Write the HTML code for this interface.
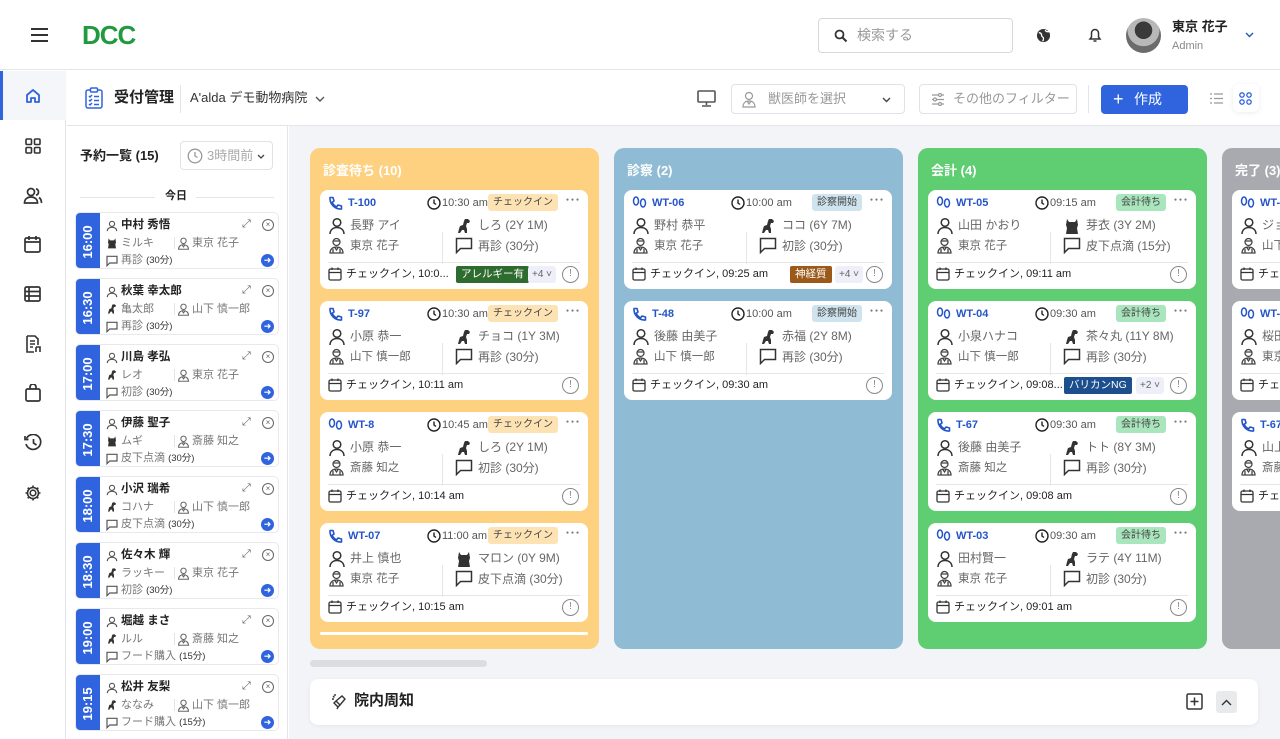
<!DOCTYPE html>
<html><head><meta charset="utf-8">
<style>
*{box-sizing:border-box;margin:0;padding:0}
body{width:1280px;height:739px;overflow:hidden;position:relative;background:#fff;font-family:"Liberation Sans","Noto Sans CJK JP",sans-serif;color:#222;line-height:1.2}
.abs{position:absolute;white-space:nowrap}
svg{display:block}
.hdr{left:0;top:0;width:1280px;height:70px;border-bottom:1px solid #e3e5e8;background:#fff}
.side{left:0;top:71px;width:66px;height:668px;border-right:1px solid #e3e5e8;background:#fff}
.sub{left:67px;top:71px;width:1213px;height:55px;border-bottom:1px solid #e3e5e8;background:#fff}
.lp{left:67px;top:126px;width:221px;height:613px;border-right:1px solid #e3e5e8;background:#fff}
.board{left:289px;top:126px;width:991px;height:613px;background:#f3f4f7}
.col{position:absolute;top:148px;height:501px;border-radius:10px;overflow:hidden}
.col h3{position:absolute;left:13px;top:15px;font-size:13px;color:#fff;font-weight:bold}
.card{position:absolute;left:10px;width:268px;height:99px;background:#fff;border-radius:8px;font-size:12px;color:#666}
.card>*{position:absolute;white-space:nowrap;line-height:15px}
.id{left:28px;top:6px;color:#2455c9;font-weight:bold;font-size:11px}
.tm{left:122px;top:6px;font-size:11px;color:#555}
.bd{top:4px;font-size:10px;padding:1px 5px;border-radius:3px;color:#444}
.dots{left:246px;top:3px;font-size:10px;color:#777;letter-spacing:0}
.vl{left:122px;top:44px;width:1px;height:32px;background:#e6e6e6}
.hr{left:8px;right:8px;top:72px;height:1px;background:#e6e6e6}
.ft{left:26px;top:77px;font-size:11px;color:#222}
.ex{left:242px;top:76px;width:17px;height:17px;border:1.3px solid #888;border-radius:50%;font-size:10px;color:#888;text-align:center;line-height:14px!important}
.it{position:absolute;left:75px;width:204px;height:57px;border:1px solid #e8e9ec;border-radius:5px;background:#fff;overflow:hidden}
.it>div{line-height:14px;white-space:nowrap}
.it .t{position:absolute;left:0;top:0;width:24px;height:57px;background:#2f64de;color:#fff;font-weight:bold;font-size:13px}
.it .t span{position:absolute;left:50%;top:50%;transform:translate(-50%,-50%) rotate(-90deg);white-space:nowrap}
.it .n{position:absolute;left:45px;top:5px;font-size:11.5px;font-weight:bold;color:#222}
.it .p{position:absolute;left:45px;top:23px;font-size:11px;color:#777}
.it .d{position:absolute;left:116px;top:23px;font-size:11px;color:#777}
.it .s{position:absolute;left:45px;top:40px;font-size:11px;color:#777}
.it .s b{font-size:9.5px;color:#333;font-weight:normal}
.it .vs{position:absolute;left:98px;top:24px;width:1px;height:12px;background:#e3e3e3}
.it .go{position:absolute;left:185px;top:41px;width:13px;height:13px;border-radius:50%;background:#2f64de;color:#fff;font-size:9px;line-height:13px!important;text-align:center}
.it .x{position:absolute;left:186px;top:6px;width:12px;height:12px;border:1.2px solid #666;border-radius:50%;font-size:8px;line-height:10px!important;text-align:center;color:#666}
.it .e{position:absolute;left:166px;top:4px;font-size:11px;color:#666}
</style></head><body>

<div class="abs hdr">
  <div class="abs" style="left:31px;top:28px;width:17px;height:2px;background:#333;box-shadow:0 6px 0 #333,0 12px 0 #333"></div>
  <div class="abs" style="left:82px;top:20px;font-size:26px;font-weight:900;color:#1f9a3e;letter-spacing:-1px">DCC</div>
  <div class="abs" style="left:818px;top:18px;width:195px;height:35px;border:1px solid #d5d7db;border-radius:4px">
    <svg class="abs" style="left:15px;top:10px" width="14" height="14" viewBox="0 0 14 14"><circle cx="5.5" cy="5.5" r="4" fill="none" stroke="#333" stroke-width="1.8"/><path d="M8.5 8.5L12.5 12.5" stroke="#333" stroke-width="2"/></svg>
    <span class="abs" style="left:38px;top:8px;font-size:14px;color:#999">検索する</span>
  </div>
  <svg class="abs" style="left:1036px;top:28px" width="15" height="15" viewBox="0 0 16 16"><circle cx="8" cy="8" r="7" fill="#333"/><path d="M3 5c2 0 3 1 3 3s2 1 2 3-1 3-1 3M10 2c0 2 2 2 4 2" stroke="#fff" stroke-width="1.4" fill="none"/></svg>
  <svg class="abs" style="left:1088px;top:27px" width="14" height="16" viewBox="0 0 14 16"><path d="M2 12h10l-1.5-2V6a3.5 3.5 0 0 0-7 0v4z" fill="none" stroke="#333" stroke-width="1.5"/><path d="M5.5 14h3" stroke="#333" stroke-width="1.5"/></svg>
  <div class="abs" style="left:1126px;top:18px;width:35px;height:35px;border-radius:50%;background:radial-gradient(circle at 50% 35%,#3a3a3a 0 30%,#b8b8b8 31% 55%,#6b6b6b 56%)"></div>
  <span class="abs" style="left:1172px;top:19px;font-size:13px;font-weight:bold">東京 花子</span>
  <span class="abs" style="left:1172px;top:40px;font-size:11px;color:#888">Admin</span>
  <svg class="abs" style="left:1245px;top:32px" width="9" height="6" viewBox="0 0 9 6"><path d="M1 1l3.5 3.5L8 1" stroke="#2455c9" stroke-width="1.4" fill="none"/></svg>
</div>

<div class="abs side">
  <div class="abs" style="left:0;top:0;width:66px;height:49px;background:#f4f6fa"></div>
  <div class="abs" style="left:0;top:0;width:3px;height:49px;background:#2f64de"></div>
  <svg class="abs" style="left:25px;top:17px" width="16" height="16" viewBox="0 0 16 16"><path d="M2 7L8 2l6 5v7H10v-4H6v4H2z" fill="none" stroke="#2f64de" stroke-width="1.8" stroke-linejoin="round"/></svg>
  <svg class="abs" style="left:25px;top:67px" width="16" height="16" viewBox="0 0 16 16" fill="none" stroke="#333" stroke-width="1.6"><rect x="1" y="1" width="5.5" height="5.5" rx="1"/><rect x="9.5" y="1" width="5.5" height="5.5" rx="1"/><rect x="1" y="9.5" width="5.5" height="5.5" rx="1"/><rect x="9.5" y="9.5" width="5.5" height="5.5" rx="1"/></svg>
  <svg class="abs" style="left:23px;top:116px" width="20" height="18" viewBox="0 0 20 18" fill="none" stroke="#333" stroke-width="1.7"><circle cx="8" cy="5" r="3.5"/><path d="M1.5 16c0-4 3-6 6.5-6s6.5 2 6.5 6z"/><path d="M13 1.8a3.3 3.3 0 0 1 0 6.4M16 10.5c1.5 1 2.5 3 2.5 5.5"/></svg>
  <svg class="abs" style="left:24px;top:164px" width="17" height="18" viewBox="0 0 17 18" fill="none" stroke="#333" stroke-width="1.7"><rect x="1" y="3" width="15" height="14" rx="1.5"/><path d="M1 7h15M5 1v4M12 1v4"/></svg>
  <svg class="abs" style="left:24px;top:215px" width="17" height="16" viewBox="0 0 17 16" fill="none" stroke="#333" stroke-width="1.7"><rect x="1" y="1" width="15" height="14" rx="1.5"/><path d="M1 5.5h15M1 10h15M5 1v14"/></svg>
  <svg class="abs" style="left:24px;top:264px" width="18" height="18" viewBox="0 0 18 18" fill="none" stroke="#333" stroke-width="1.6"><path d="M3 1h8l3 3v6M3 1v16h7"/><path d="M6 6h5M6 9h5M6 12h3"/><path d="M12 12v5M12 12h4v5"/></svg>
  <svg class="abs" style="left:25px;top:313px" width="16" height="18" viewBox="0 0 16 18" fill="none" stroke="#333" stroke-width="1.7"><rect x="1" y="5" width="14" height="12" rx="1.5"/><path d="M5 5V3a3 3 0 0 1 6 0v2"/></svg>
  <svg class="abs" style="left:24px;top:363px" width="18" height="17" viewBox="0 0 18 17" fill="none" stroke="#333" stroke-width="1.7"><path d="M2.5 4.5A7.5 7.5 0 1 1 2 10"/><path d="M1 2v3.5h3.5M9.5 5v4l3 2"/></svg>
  <svg class="abs" style="left:24px;top:413px" width="18" height="18" viewBox="0 0 18 18" fill="none" stroke="#333" stroke-width="1.6"><circle cx="9" cy="9" r="2.8"/><path d="M9 1.5v2.5M9 14v2.5M1.5 9H4M14 9h2.5M3.7 3.7l1.8 1.8M12.5 12.5l1.8 1.8M3.7 14.3l1.8-1.8M12.5 5.5l1.8-1.8"/><circle cx="9" cy="9" r="5.5"/></svg>
</div>

<div class="abs sub">
  <svg class="abs" style="left:18px;top:16px" width="18" height="22" viewBox="0 0 18 22" fill="none" stroke="#2f64de" stroke-width="1.5"><rect x="1" y="3" width="16" height="18" rx="2"/><rect x="5.5" y="1" width="7" height="4" rx="1" fill="#fff"/><path d="M4 9l1 1 2-2M4 13l1 1 2-2M4 17l1 1 2-2M9 9.5h5M9 13.5h5M9 17.5h5"/></svg>
  <span class="abs" style="left:47px;top:18px;font-size:15px;font-weight:bold">受付管理</span>
  <div class="abs" style="left:113px;top:14px;width:1px;height:28px;background:#e3e5e8"></div>
  <span class="abs" style="left:123px;top:19px;font-size:13px;color:#333">A'alda デモ動物病院</span>
  <svg class="abs" style="left:248px;top:25px" width="10" height="6" viewBox="0 0 10 6"><path d="M1 1l4 4 4-4" stroke="#555" stroke-width="1.4" fill="none"/></svg>
  <svg class="abs" style="left:630px;top:19px" width="19" height="17" viewBox="0 0 19 17" fill="none" stroke="#555" stroke-width="1.6"><rect x="1" y="1" width="17" height="11" rx="1"/><path d="M9.5 12v3M5 16h9"/></svg>
  <div class="abs" style="left:664px;top:13px;width:174px;height:30px;border:1px solid #e0e2e5;border-radius:4px">
    <svg class="abs" style="left:9px;top:6px" width="16" height="17" viewBox="0 0 16 17" fill="none" stroke="#999" stroke-width="1.2"><circle cx="8" cy="5" r="3.5"/><path d="M2 16c0-4 2.5-6 6-6s6 2 6 6zM6 10l2 3 2-3"/></svg>
    <span class="abs" style="left:36px;top:6px;font-size:13px;color:#999">獣医師を選択</span>
    <svg class="abs" style="left:150px;top:12px" width="9" height="6" viewBox="0 0 9 6"><path d="M1 1l3.5 3.5L8 1" stroke="#444" stroke-width="1.4" fill="none"/></svg>
  </div>
  <div class="abs" style="left:852px;top:13px;width:158px;height:30px;border:1px solid #e0e2e5;border-radius:4px">
    <svg class="abs" style="left:11px;top:8px" width="14" height="13" viewBox="0 0 14 13" fill="none" stroke="#999" stroke-width="1.2"><path d="M1 2h12M1 6.5h12M1 11h12"/><circle cx="9" cy="2" r="1.5" fill="#fff"/><circle cx="4" cy="6.5" r="1.5" fill="#fff"/><circle cx="9" cy="11" r="1.5" fill="#fff"/></svg>
    <span class="abs" style="left:33px;top:6px;font-size:13px;color:#999">その他のフィルター</span>
  </div>
  <div class="abs" style="left:1021px;top:14px;width:1px;height:28px;background:#e3e5e8"></div>
  <div class="abs" style="left:1034px;top:14px;width:87px;height:29px;background:#2f64de;border-radius:4px;color:#fff;font-size:14px">
    <span class="abs" style="left:12px;top:4px;font-size:18px;line-height:20px">+</span>
    <span class="abs" style="left:33px;top:6px">作成</span>
  </div>
  <svg class="abs" style="left:1143px;top:22px" width="13" height="11" viewBox="0 0 13 11" fill="none" stroke="#999" stroke-width="1.2"><path d="M0 1h2M4 1h9M0 5.5h2M4 5.5h9M0 10h2M4 10h9"/></svg>
  <div class="abs" style="left:1166px;top:13px;width:26px;height:28px;background:#fff;border-radius:6px;box-shadow:0 1px 6px rgba(0,0,0,.08)"></div>
  <svg class="abs" style="left:1172px;top:21px" width="13" height="13" viewBox="0 0 13 13" fill="none" stroke="#2f64de" stroke-width="1.3"><circle cx="3" cy="3" r="2.2"/><circle cx="10" cy="3" r="2.2"/><circle cx="3" cy="10" r="2.2"/><circle cx="10" cy="10" r="2.2"/></svg>
</div>

<div class="abs lp">
  <span class="abs" style="left:13px;top:22px;font-size:13px;font-weight:bold">予約一覧 (15)</span>
  <div class="abs" style="left:113px;top:15px;width:93px;height:29px;border:1px solid #e0e2e5;border-radius:4px">
    <svg class="abs" style="left:6px;top:6px" width="16" height="16" viewBox="0 0 16 16" fill="none" stroke="#999" stroke-width="1.3"><circle cx="8" cy="8" r="6.8"/><path d="M8 4v4l2.5 1.5"/></svg>
    <span class="abs" style="left:26px;top:6px;font-size:13px;color:#aaa">3時間前</span>
    <svg class="abs" style="left:76px;top:12px" width="8" height="5" viewBox="0 0 8 5"><path d="M1 1l3 3 3-3" stroke="#444" stroke-width="1.3" fill="none"/></svg>
  </div>
  <div class="abs" style="left:13px;top:71px;width:75px;height:1px;background:#e3e5e8"></div>
  <span class="abs" style="left:98px;top:64px;font-size:11px;font-weight:bold">今日</span>
  <div class="abs" style="left:129px;top:71px;width:78px;height:1px;background:#e3e5e8"></div>
</div>

<div id="items"></div>

<div class="abs board"></div>

<div class="col" style="left:310px;width:289px;background:#fdd17f"><h3>診査待ち (10)</h3>
 <div class="abs" style="left:10px;top:484px;width:268px;height:3px;background:#fff;border-radius:2px"></div>
</div>
<div class="col" style="left:614px;width:289px;background:#8fbcd4"><h3>診察 (2)</h3></div>
<div class="col" style="left:918px;width:289px;background:#5fcd71"><h3>会計 (4)</h3></div>
<div class="col" style="left:1222px;width:80px;background:#a8aab0"><h3>完了 (3)</h3></div>

<div id="cards"></div>

<div class="abs" style="left:310px;top:660px;width:177px;height:7px;background:#dcdde0;border-radius:4px"></div>
<div class="abs" style="left:310px;top:679px;width:948px;height:46px;background:#fff;border-radius:8px;box-shadow:0 1px 5px rgba(0,0,0,.06)">
  <svg class="abs" style="left:21px;top:14px" width="17" height="17" viewBox="0 0 17 17" fill="none" stroke="#333" stroke-width="1.4"><path d="M5 8l6-5 3 3-5 6zM5 8l-2 2 4 4 2-2M7 14l-1 2"/><path d="M2 3l1.5 1.5M1 6h2M4 1v2"/></svg>
  <span class="abs" style="left:44px;top:13px;font-size:15px;font-weight:bold">院内周知</span>
  <svg class="abs" style="left:876px;top:14px" width="17" height="17" viewBox="0 0 17 17" fill="none" stroke="#333" stroke-width="1.5"><rect x="1" y="1" width="15" height="15" rx="1.5"/><path d="M8.5 4.5v8M4.5 8.5h8"/></svg>
  <div class="abs" style="left:906px;top:12px;width:21px;height:22px;background:#e9eaec;border-radius:3px"></div>
  <svg class="abs" style="left:911px;top:20px" width="11" height="7" viewBox="0 0 11 7"><path d="M1 6l4.5-4.5L10 6" stroke="#333" stroke-width="1.4" fill="none"/></svg>
</div>

<script>
var PB='<svg width="18" height="18" viewBox="0 0 18 18" fill="none" stroke="#333" stroke-width="1.5"><circle cx="9" cy="5.5" r="3.8"/><path d="M2 17c0-4 3-6.5 7-6.5s7 2.5 7 6.5"/></svg>';
var V='<svg width="17" height="17" viewBox="0 0 17 17" fill="none" stroke="#444" stroke-width="1.3"><circle cx="8.5" cy="5" r="3.5"/><path d="M5 4h7M2 16c0-4 3-6 6.5-6s6.5 2 6.5 6zM6.5 10l2 3 2-3M5 12v4M12 12v4"/></svg>';
var Vs='<svg width="13" height="13" viewBox="0 0 17 17" fill="none" stroke="#666" stroke-width="1.4"><circle cx="8.5" cy="5" r="3.5"/><path d="M2 16c0-4 3-6 6.5-6s6.5 2 6.5 6zM6.5 10l2 3 2-3"/></svg>';
var CH='<svg width="18" height="17" viewBox="0 0 18 17" fill="none" stroke="#333" stroke-width="1.5"><path d="M1.5 1.5h15v10h-11l-4 4z"/></svg>';
var CHs='<svg width="12" height="12" viewBox="0 0 18 17" fill="none" stroke="#555" stroke-width="1.8"><path d="M1.5 1.5h15v10h-11l-4 4z"/></svg>';
var DOG='<svg width="18" height="18" viewBox="0 0 18 18"><path d="M10 2l3 0 2 2-1 2h-2l-1 3 1 3v4h-2l-1-3-2 0-2 3H3l1-4 1-3 3-1 1-4z" fill="#333"/></svg>';
var CAT='<svg width="18" height="18" viewBox="0 0 18 18"><path d="M4 2l2 3h6l2-3 1 6-1 3 1 6H3l1-6-1-3z" fill="#333"/></svg>';
var CAL='<svg width="14" height="14" viewBox="0 0 14 14" fill="none" stroke="#333" stroke-width="1.3"><rect x="1" y="2" width="12" height="11" rx="1.5"/><path d="M1 5.5h12M4 0.5v2.5M10 0.5v2.5"/></svg>';
var CLK='<svg width="14" height="14" viewBox="0 0 14 14" fill="none" stroke="#222" stroke-width="1.4"><circle cx="7" cy="7" r="6"/><path d="M7 3.5V7l2 1.5"/></svg>';
var PH='<svg width="15" height="15" viewBox="0 0 15 15" fill="none" stroke="#2455c9" stroke-width="1.6"><path d="M2 1.5l3 0 1 3.5-1.8 1.3a8 8 0 0 0 4.5 4.5L10 9l3.5 1v3c-6.5.5-12-5-11.5-11.5z" stroke-linejoin="round"/></svg>';
var FT='<svg width="15" height="15" viewBox="0 0 15 15" fill="none" stroke="#2455c9" stroke-width="1.5"><ellipse cx="4" cy="5" rx="2.5" ry="4"/><ellipse cx="11" cy="7" rx="2.5" ry="4"/></svg>';

var items=[["16:00","中村 秀悟","ミルキ","東京 花子","再診","30分",1],["16:30","秋葉 幸太郎","亀太郎","山下 慎一郎","再診","30分",0],["17:00","川島 孝弘","レオ","東京 花子","初診","30分",0],["17:30","伊藤 聖子","ムギ","斎藤 知之","皮下点滴","30分",1],["18:00","小沢 瑞希","コハナ","山下 慎一郎","皮下点滴","30分",0],["18:30","佐々木 輝","ラッキー","東京 花子","初診","30分",0],["19:00","堀越 まさ","ルル","斎藤 知之","フード購入","15分",0],["19:15","松井 友梨","ななみ","山下 慎一郎","フード購入","15分",0]];
var h='';
items.forEach(function(a,i){
 var pet=a[6]?'<svg width="12" height="12" viewBox="0 0 18 18"><path d="M4 2l2 3h6l2-3 1 6-1 3 1 6H3l1-6-1-3z" fill="#333"/></svg>':'<svg width="12" height="12" viewBox="0 0 18 18"><path d="M10 2l3 0 2 2-1 2h-2l-1 3 1 3v4h-2l-1-3-2 0-2 3H3l1-4 1-3 3-1 1-4z" fill="#333"/></svg>';
 h+='<div class="it" style="top:'+(212+i*66)+'px"><div class="t"><span>'+a[0]+'</span></div>'+
 '<div class="abs" style="left:30px;top:7px"><svg width="12" height="12" viewBox="0 0 14 14" fill="none" stroke="#555" stroke-width="1.3"><circle cx="7" cy="4.5" r="3"/><path d="M1.5 13c0-3 2.5-4.5 5.5-4.5s5.5 1.5 5.5 4.5"/></svg></div>'+
 '<div class="n">'+a[1]+'</div><div class="e">⤢</div><div class="x">×</div>'+
 '<div class="abs" style="left:30px;top:24px">'+pet+'</div><div class="p">'+a[2]+'</div><div class="vs"></div>'+
 '<div class="abs" style="left:101px;top:24px">'+Vs+'</div><div class="d">'+a[3]+'</div>'+
 '<div class="abs" style="left:30px;top:42px">'+CHs+'</div><div class="s">'+a[4]+' <b>('+a[5]+')</b></div><div class="go">➜</div></div>';
});
document.getElementById('items').innerHTML=h;

var cols=[
 [310,"#fde3b4",[["P","T-100","10:30 am","チェックイン","長野 アイ","東京 花子","しろ (2Y 1M)","再診 (30分)","10:0...",["アレルギー有","#2e6b2e"],DOG],
   ["P","T-97","10:30 am","チェックイン","小原 恭一","山下 慎一郎","チョコ (1Y 3M)","再診 (30分)","10:11 am",null,DOG],
   ["F","WT-8","10:45 am","チェックイン","小原 恭一","斎藤 知之","しろ (2Y 1M)","初診 (30分)","10:14 am",null,DOG],
   ["P","WT-07","11:00 am","チェックイン","井上 慎也","東京 花子","マロン (0Y 9M)","皮下点滴 (30分)","10:15 am",null,CAT]]],
 [614,"#cfe4ee",[["F","WT-06","10:00 am","診察開始","野村 恭平","東京 花子","ココ (6Y 7M)","初診 (30分)","09:25 am",["神経質","#9b5a1a"],DOG],
   ["P","T-48","10:00 am","診察開始","後藤 由美子","山下 慎一郎","赤福 (2Y 8M)","再診 (30分)","09:30 am",null,DOG]]],
 [918,"#a9e6bd",[["F","WT-05","09:15 am","会計待ち","山田 かおり","東京 花子","芽衣 (3Y 2M)","皮下点滴 (15分)","09:11 am",null,CAT],
   ["F","WT-04","09:30 am","会計待ち","小泉ハナコ","山下 慎一郎","茶々丸 (11Y 8M)","再診 (30分)","09:08...",["バリカンNG","#1d4f8f"],DOG],
   ["P","T-67","09:30 am","会計待ち","後藤 由美子","斎藤 知之","トト (8Y 3M)","再診 (30分)","09:08 am",null,DOG],
   ["F","WT-03","09:30 am","会計待ち","田村賢一","東京 花子","ラテ (4Y 11M)","初診 (30分)","09:01 am",null,DOG]]],
 [1222,"#eee",[["F","WT-02","","","ジョン","山下 慎一郎","","","",null,DOG],["F","WT-01","","","桜田","東京 花子","","","",null,DOG],["P","T-67","","","山上","斎藤 知之","","","",null,DOG]]]
];
var c='';
cols.forEach(function(col){
 col[2].forEach(function(d,i){
  var top=190+i*111;
  c+='<div class="card" style="left:'+(col[0]+10)+'px;top:'+top+'px">'+
  '<div style="left:8px;top:6px">'+(d[0]=="P"?PH:FT)+'</div><div class="id">'+d[1]+'</div>'+
  (d[2]?'<div style="left:107px;top:6px">'+CLK+'</div><div class="tm">'+d[2]+'</div><div class="bd" style="left:'+(d[3]=="チェックイン"?168:188)+'px;background:'+col[1]+'">'+d[3]+'</div><div class="dots">● ● ●</div>':'')+
  '<div style="left:8px;top:27px">'+PB+'</div><div style="left:30px;top:28px;font-size:12px">'+d[4]+'</div>'+
  '<div style="left:8px;top:47px">'+V+'</div><div style="left:30px;top:49px;font-size:11.5px">'+d[5]+'</div>'+
  '<div class="vl" style="top:42px"></div>'+
  (d[6]?'<div style="left:135px;top:27px">'+d[10]+'</div><div style="left:158px;top:28px;font-size:12px">'+d[6]+'</div>'+
  '<div style="left:135px;top:47px">'+CH+'</div><div style="left:158px;top:49px;font-size:12px">'+d[7]+'</div>':'')+
  '<div class="hr"></div><div style="left:8px;top:77px">'+CAL+'</div><div class="ft">チェックイン, '+d[8]+'</div>'+
  (d[9]?'<div style="left:'+(d[9][0]=="神経質"?166:136)+'px;top:76px;background:'+d[9][1]+';color:#fff;font-size:10.5px;padding:1px 5px;border-radius:2px">'+d[9][0]+'</div><div style="left:'+(d[9][0]=="神経質"?211:208)+'px;top:76px;background:#eeeff8;color:#666;font-size:10px;padding:1px 4px;border-radius:3px">+'+(d[9][0]=="バリカンNG"?2:4)+' ˅</div>':'')+
  (d[8]?'<div class="ex">!</div>':'')+'</div>';
 });
});
document.getElementById('cards').innerHTML=c.replace(/● ● ●/g,'<span style="font-size:5px;letter-spacing:2px;vertical-align:middle">●●●</span>');
</script>
</body></html>
